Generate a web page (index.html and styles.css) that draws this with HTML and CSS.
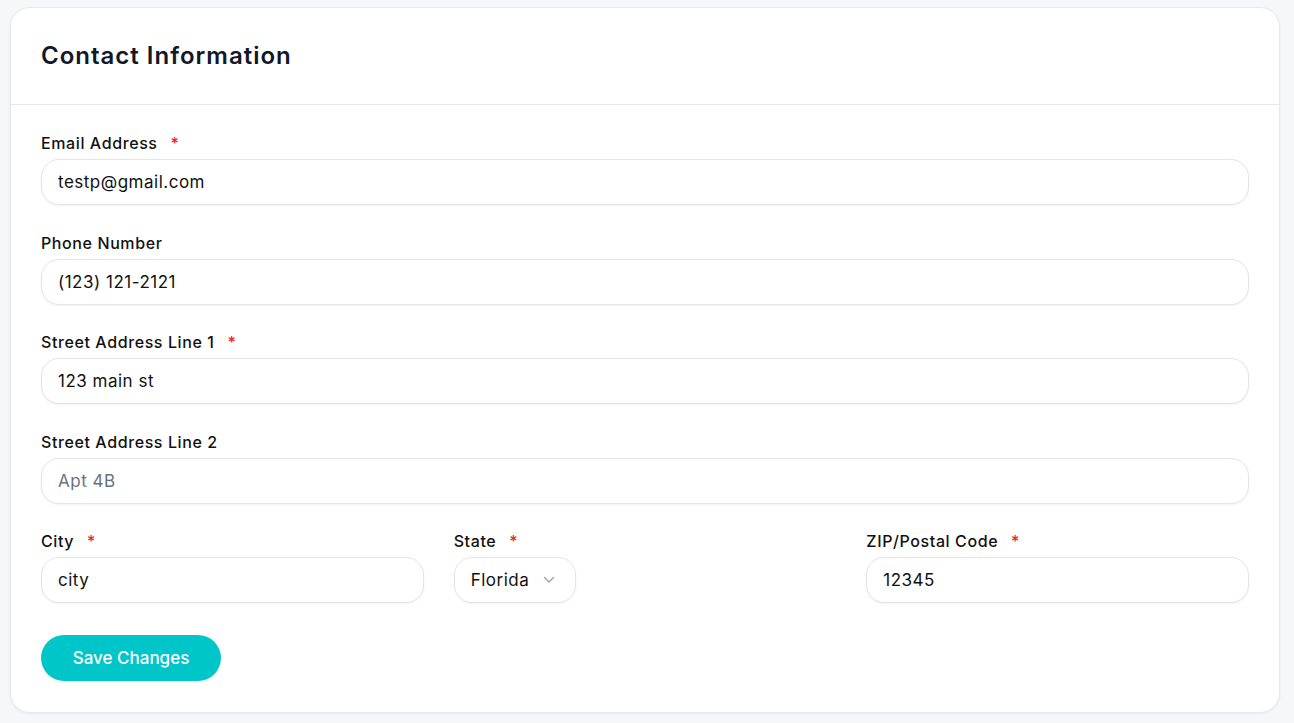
FILE: index.html
```html
<!DOCTYPE html>
<html>
    <head>
        <title>Contact Information</title>
        <link rel="stylesheet" href="styles.css">
    </head>
    <body>
        <div class="page">
            <div class="card">
                <div class="card-header">
                    <p class="title">Contact Information</p>
                </div>
                <form class="card-body">
                    <div class="field">
                        <label class="label">Email Address <span class="req">*</span></label>
                        <input class="input" type="text" value="testp@gmail.com">
                    </div>
                    <div class="field">
                        <label class="label">Phone Number</label>
                        <input class="input" type="text" value="(123) 121-2121">
                    </div>
                    <div class="field">
                        <label class="label">Street Address Line 1 <span class="req">*</span></label>
                        <input class="input" type="text" value="123 main st">
                    </div>
                    <div class="field">
                        <label class="label">Street Address Line 2</label>
                        <input class="input" type="text" placeholder="Apt 4B">
                    </div>
                    <div class="row">
                        <div class="field">
                            <label class="label">City <span class="req">*</span></label>
                            <input class="input" type="text" value="city">
                        </div>
                        <div class="field">
                            <label class="label">State <span class="req">*</span></label>
                            <div class="select">
                                Florida
                                <svg width="12" height="8" viewBox="0 0 12 8"><path d="M1.5 1.5 6 6l4.5-4.5" fill="none" stroke="#9ca3af" stroke-width="1.4" stroke-linecap="round" stroke-linejoin="round"/></svg>
                            </div>
                        </div>
                        <div class="field">
                            <label class="label">ZIP/Postal Code <span class="req">*</span></label>
                            <input class="input" type="text" value="12345">
                        </div>
                    </div>
                    <button type="button" class="save-button">Save Changes</button>
                </form>
            </div>
        </div>
    </body>
</html>
```

FILE: styles.css
```css
body {
    margin: 0;
    background-color: #f6f7f9;
    font-family: Inter, "Noto Sans", sans-serif;
    color: #111827;
}

.page {
    padding: 7px 14px 10px 10px;
}

.card {
    background-color: white;
    border: 1px solid #e8e9ec;
    border-radius: 20px;
    box-shadow: 0 1px 3px rgba(0, 0, 0, 0.06);
}

.card-header {
    padding: 32px 30px;
    border-bottom: 1px solid #e5e7eb;
}

.title {
    margin: 0;
    font-size: 24px;
    line-height: 32px;
    font-weight: 600;
    letter-spacing: 1px;
    color: #111827;
}

.card-body {
    padding: 26px 30px 31px 30px;
}

.field {
    margin-bottom: 25.5px;
}

.label {
    display: block;
    font-size: 16px;
    line-height: 24px;
    font-weight: 500;
    letter-spacing: 0.6px;
    color: #111;
    margin-bottom: 4px;
}

.req {
    color: #ef2020;
    margin-left: 8px;
}

.input {
    box-sizing: border-box;
    width: 100%;
    height: 46px;
    padding: 0 16px;
    border: 1px solid #e3e4e8;
    border-radius: 18px;
    box-shadow: 0 1px 2px rgba(0, 0, 0, 0.05);
    font-family: inherit;
    font-size: 17px;
    letter-spacing: 0.5px;
    color: #111;
    outline: none;
}

.input::placeholder {
    color: #6b7280;
}

.row {
    display: grid;
    grid-template-columns: 1fr 1fr 1fr;
    column-gap: 30px;
}

.select {
    box-sizing: border-box;
    display: inline-flex;
    align-items: center;
    gap: 14px;
    height: 46px;
    padding: 0 20px 0 16px;
    border: 1px solid #e3e4e8;
    border-radius: 18px;
    box-shadow: 0 1px 2px rgba(0, 0, 0, 0.05);
    font-size: 17px;
    letter-spacing: 0.5px;
    color: #111;
}

.save-button {
    margin-top: 6px;
    width: 180px;
    height: 46px;
    border: none;
    border-radius: 23px;
    background-color: #00c6c9;
    color: white;
    font-family: inherit;
    font-size: 17px;
    font-weight: 500;
    cursor: pointer;
}
```
